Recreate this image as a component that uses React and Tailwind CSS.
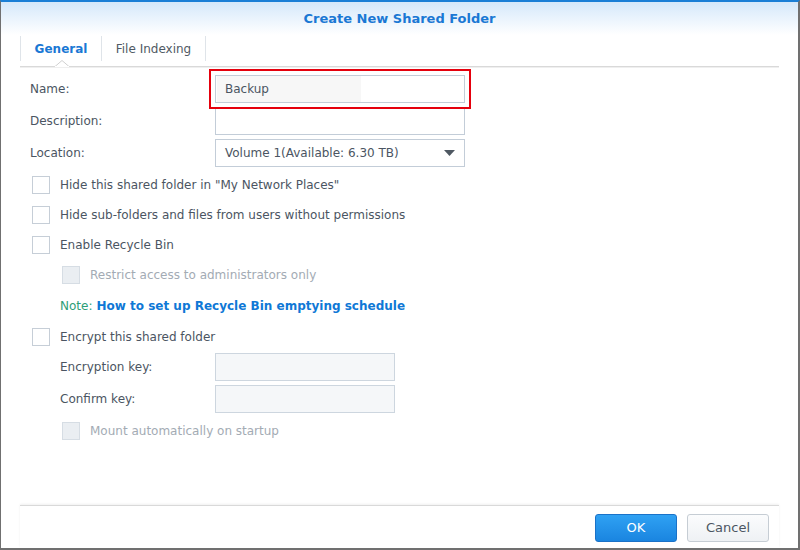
import React from 'react';

const font = { fontFamily: '"DejaVu Sans", Verdana, sans-serif' };

function Checkbox({ disabled }) {
  return (
    <span
      className={`inline-block w-[18px] h-[18px] border shrink-0 ${
        disabled ? 'bg-[#eaeef2] border-[#d6dde4]' : 'bg-white border-[#c6ced7]'
      }`}
    />
  );
}

function CheckRow({ label, disabled, indent }) {
  return (
    <div className={`h-[30px] flex items-center gap-[10px] ${indent ? 'pl-[42px]' : 'pl-[12px]'}`}>
      <Checkbox disabled={disabled} />
      <span className={disabled ? 'text-[#a3abb4]' : 'text-[#4b5562]'}>{label}</span>
    </div>
  );
}

function FieldRow({ label, children, indent, className = '' }) {
  return (
    <div className={`h-[28px] flex items-center ${className}`}>
      <div className={`shrink-0 ${indent ? 'w-[195px] pl-[40px]' : 'w-[195px] pl-[10px]'}`}>{label}</div>
      {children}
    </div>
  );
}

export default function App() {
  return (
    <div
      className="w-[800px] h-[550px] bg-white flex flex-col border-t-2 border-t-[#1b7fd6] border-l border-l-[#707070] border-r-2 border-r-[#707070] border-b-2 border-b-[#707070] text-[12px] text-[#4b5562] overflow-hidden"
      style={font}
    >
      {/* title */}
      <div className="h-[33px] flex items-center justify-center bg-gradient-to-b from-[#d5e8fa] to-white">
        <span className="text-[13px] font-bold text-[#1a78d4]">Create New Shared Folder</span>
      </div>

      <div className="flex-1 flex flex-col px-[19px]">
        {/* tabs */}
        <div className="relative h-[32px] border-b border-[#d9d9d9] shadow-[0_1px_0_#efefef]">
          <div className="flex h-[25px] mt-[1px]">
            <div className="w-[82px] flex items-center justify-center border-l border-r border-[#dfe4e9] font-bold text-[#1a78d4]">
              General
            </div>
            <div className="w-[104px] flex items-center justify-center border-r border-[#dfe4e9] text-[#505a64]">
              File Indexing
            </div>
          </div>
          <svg className="absolute left-[35px] bottom-[-1px]" width="14" height="7" viewBox="0 0 14 7">
            <path d="M0 6.5 L7 0.5 L14 6.5" fill="white" stroke="#d0d0d0" strokeWidth="1" />
            <rect x="0" y="6" width="14" height="1" fill="white" />
          </svg>
        </div>

        {/* form */}
        <div className="flex flex-col mt-[8px]">
          <FieldRow label="Name:">
            <div className="relative w-[250px] h-[28px]">
              <div className="absolute -inset-[6px] border-2 border-[#e5000d]" />
              <div className="w-full h-full border border-[#c3cdd8] bg-white flex items-center pl-[1px]">
                <span className="h-[26px] w-[144px] bg-[#f7f7f7] flex items-center pl-[8px] text-[#4b5562]">Backup</span>
              </div>
            </div>
          </FieldRow>
          <FieldRow label="Description:" className="mt-[4px]">
            <div className="w-[250px] h-[28px] border border-[#c3cdd8] bg-white" />
          </FieldRow>
          <FieldRow label="Location:" className="mt-[4px]">
            <div className="w-[250px] h-[28px] border border-[#c3cdd8] bg-white flex items-center justify-between pl-[9px] pr-[9px]">
              <span>Volume 1(Available: 6.30 TB)</span>
              <svg width="11" height="6" viewBox="0 0 11 6">
                <path d="M0 0 H11 L5.5 6 Z" fill="#4f5862" />
              </svg>
            </div>
          </FieldRow>

          <div className="mt-[3px]">
            <CheckRow label={'Hide this shared folder in "My Network Places"'} />
            <CheckRow label="Hide sub-folders and files from users without permissions" />
            <CheckRow label="Enable Recycle Bin" />
            <CheckRow label="Restrict access to administrators only" disabled indent />
            <div className="h-[32px] flex items-center pl-[40px]">
              <span className="text-[#2e9e77]">Note:</span>
              <span className="ml-[4px] font-bold text-[#0f78d6]">How to set up Recycle Bin emptying schedule</span>
            </div>
            <CheckRow label="Encrypt this shared folder" />
          </div>

          <FieldRow label="Encryption key:" indent className="mt-[1px]">
            <div className="w-[180px] h-[28px] border border-[#cdd6df] bg-[#f5f7f9]" />
          </FieldRow>
          <FieldRow label="Confirm key:" indent className="mt-[4px]">
            <div className="w-[180px] h-[28px] border border-[#cdd6df] bg-[#f5f7f9]" />
          </FieldRow>
          <div className="mt-[3px]">
            <CheckRow label="Mount automatically on startup" disabled indent />
          </div>
        </div>

        <div className="flex-1" />

        {/* footer */}
        <div className="border-t border-[#d9d9d9] shadow-[0_-1px_2px_#f0f0f0] flex justify-end gap-[10px] pt-[8px] pb-[6px] pr-[10px]">
          <button className="w-[82px] h-[28px] rounded-[3px] border border-[#1a72c8] bg-gradient-to-b from-[#2fa1f3] to-[#1a85e0] text-white text-[13px]">
            OK
          </button>
          <button className="w-[82px] h-[28px] rounded-[3px] border border-[#c6cdd4] bg-gradient-to-b from-[#fbfcfd] to-[#eef1f4] text-[#4b5562] text-[13px]">
            Cancel
          </button>
        </div>
      </div>
    </div>
  );
}
